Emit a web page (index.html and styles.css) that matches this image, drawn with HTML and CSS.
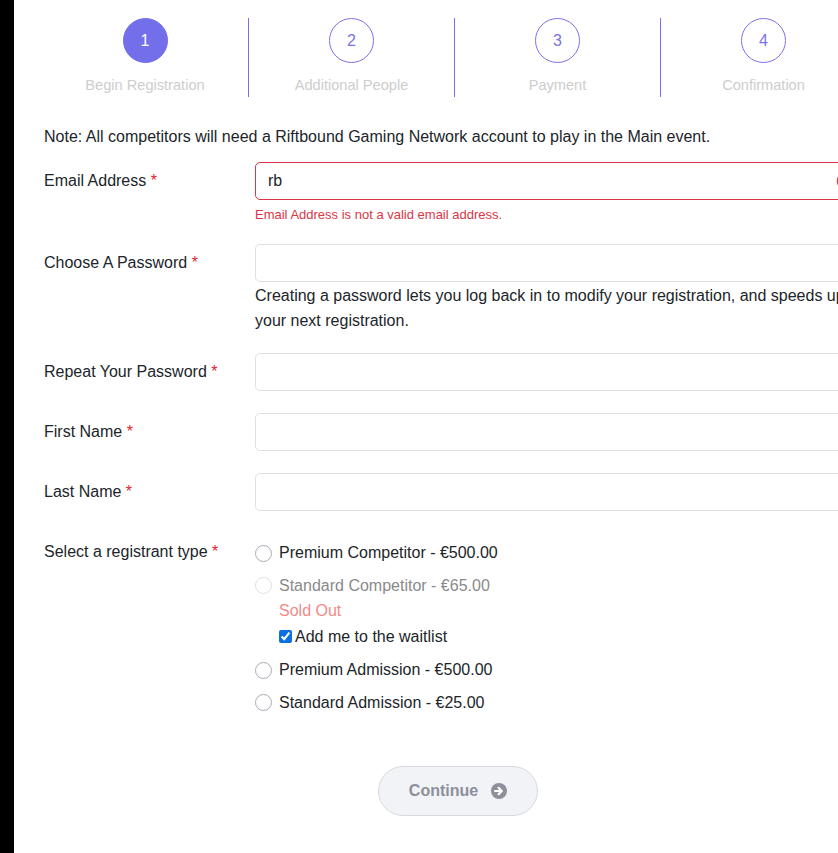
FILE: index.html
```html
<!DOCTYPE html>
<html lang="en">
<head>
  <meta charset="UTF-8" />
  <meta name="viewport" content="width=device-width, initial-scale=1.0"/>
  <title>Registration</title>
  <link rel="stylesheet" href="styles.css">
</head>
<body>
  <div class="edge"></div>

  <main class="page">
    <!-- Registration steps -->
    <ol class="steps">
      <li class="step active"><span class="step-num">1</span><span class="step-label">Begin Registration</span></li>
      <li class="step"><span class="step-num">2</span><span class="step-label">Additional People</span></li>
      <li class="step"><span class="step-num">3</span><span class="step-label">Payment</span></li>
      <li class="step"><span class="step-num">4</span><span class="step-label">Confirmation</span></li>
    </ol>

    <form class="reg-form" onsubmit="return false">
      <p class="note">Note: All competitors will need a Riftbound Gaming Network account to play in the Main event.</p>

      <div class="form-row">
        <label class="form-label" for="email">Email Address <span class="req">*</span></label>
        <div class="form-field">
          <div class="input-wrap">
            <input class="form-input is-invalid" id="email" type="text" value="rb">
            <svg class="invalid-icon" viewBox="0 0 20 20" width="20" height="20">
              <circle cx="10" cy="10" r="8.5" fill="none" stroke="#dc3545" stroke-width="1.5"/>
              <path d="M10 5.5v5.5" stroke="#dc3545" stroke-width="1.8"/>
              <circle cx="10" cy="14" r="1" fill="#dc3545"/>
            </svg>
          </div>
          <div class="form-error">Email Address is not a valid email address.</div>
        </div>
      </div>

      <div class="form-row">
        <label class="form-label" for="pass">Choose A Password <span class="req">*</span></label>
        <div class="form-field">
          <input class="form-input" id="pass" type="password">
          <div class="form-help">Creating a password lets you log back in to modify your registration, and speeds up your next registration.</div>
        </div>
      </div>

      <div class="form-row">
        <label class="form-label" for="pass2">Repeat Your Password <span class="req">*</span></label>
        <div class="form-field">
          <input class="form-input" id="pass2" type="password">
        </div>
      </div>

      <div class="form-row">
        <label class="form-label" for="first">First Name <span class="req">*</span></label>
        <div class="form-field">
          <input class="form-input" id="first" type="text">
        </div>
      </div>

      <div class="form-row">
        <label class="form-label" for="last">Last Name <span class="req">*</span></label>
        <div class="form-field">
          <input class="form-input" id="last" type="text">
        </div>
      </div>

      <div class="form-row">
        <span class="form-label">Select a registrant type <span class="req">*</span></span>
        <div class="form-field options">
          <label class="option"><input type="radio" name="rtype"> Premium Competitor - €500.00</label>
          <div class="option-group">
            <label class="option disabled"><input type="radio" name="rtype" disabled> Standard Competitor - €65.00</label>
            <div class="sold-out">Sold Out</div>
            <label class="waitlist"><input type="checkbox" checked>Add me to the waitlist</label>
          </div>
          <label class="option"><input type="radio" name="rtype"> Premium Admission - €500.00</label>
          <label class="option"><input type="radio" name="rtype"> Standard Admission - €25.00</label>
        </div>
      </div>

      <div class="actions">
        <button class="btn-continue" type="submit">
          Continue
          <svg viewBox="0 0 16 16" width="16" height="16">
            <circle cx="8" cy="8" r="8" fill="#8d909a"/>
            <path d="M4 8h6.5M7.6 4.8 10.8 8l-3.2 3.2" stroke="#fff" stroke-width="2.2" fill="none" stroke-linecap="round" stroke-linejoin="round"/>
          </svg>
        </button>
      </div>
    </form>
  </main>
</body>
</html>
```

FILE: styles.css
```css
/* Base */
html, body {
  margin: 0;
  height: 100%;
  overflow: hidden;
}
body {
  display: flex;
  background: #fff;
  color: #212529;
  font-family: "Liberation Sans", Arial, sans-serif;
  font-size: 16px;
}

/* Dark strip on the left */
.edge {
  width: 14px;
  flex-shrink: 0;
  background: #000;
}

.page {
  flex-shrink: 0;
  width: 826px;
  padding: 18px 0 0 28px;
}

/* Steps bar */
.steps {
  display: flex;
  list-style: none;
  margin: 0;
  padding: 0;
  width: 824px;
}
.step {
  box-sizing: border-box;
  width: 206px;
  height: 79px;
  display: flex;
  flex-direction: column;
  align-items: center;
}
.step + .step {
  border-left: 1px solid #7b70e6;
}
.step-num {
  box-sizing: border-box;
  width: 45px;
  height: 45px;
  border-radius: 50%;
  border: 1.5px solid #7c72ea;
  color: #7c72ea;
  display: flex;
  align-items: center;
  justify-content: center;
  font-size: 16px;
}
.step.active .step-num {
  background: #736eea;
  border-color: #736eea;
  color: #fff;
}
.step-label {
  margin-top: 14px;
  font-size: 14.6px;
  line-height: 17px;
  color: #cdcdcd;
}

/* Form */
.reg-form {
  padding-left: 2px;
}
.note {
  margin: 31px 0 16px;
  line-height: 18px;
}
.form-row {
  display: grid;
  grid-template-columns: 211px 1fr;
  margin-bottom: 22px;
}
.form-label {
  line-height: 38px;
}
.req {
  color: #e0242f;
}
.input-wrap {
  position: relative;
}
.form-input {
  display: block;
  box-sizing: border-box;
  width: 100%;
  height: 38px;
  margin: 0;
  padding: 0 12px;
  border: 1px solid #dfe0e6;
  border-radius: 5px;
  font: 16px "Liberation Sans", Arial, sans-serif;
  color: #212529;
  background: #fff;
  outline: none;
}
.form-input.is-invalid {
  border-color: #dc3545;
}
.invalid-icon {
  position: absolute;
  right: 12px;
  top: 9px;
}
.form-error {
  margin-top: 7px;
  font-size: 13px;
  line-height: 15px;
  color: #dc3545;
}
.form-help {
  padding-top: 1px;
  line-height: 25px;
  margin-bottom: -2px;
}

/* Registrant type options */
.options {
  display: flex;
  flex-direction: column;
  gap: 8.5px;
  padding-top: 8px;
}
.option {
  display: flex;
  align-items: center;
  line-height: 24px;
}
.option input {
  appearance: none;
  width: 17px;
  height: 17px;
  margin: 0 7px 0 0;
  border: 1px solid #a9abb3;
  border-radius: 50%;
  background: #fff;
}
.option.disabled {
  color: #8a8a8a;
}
.option.disabled input {
  border-color: #dedfe3;
}
.sold-out {
  padding-left: 24px;
  line-height: 25px;
  color: #f28a8a;
}
.waitlist {
  display: flex;
  align-items: center;
  padding-left: 24px;
  line-height: 27px;
}
.waitlist input {
  width: 13px;
  height: 13px;
  margin: 0 3px 0 0;
  accent-color: #0b6fe0;
}

/* Continue button */
.actions {
  display: flex;
  justify-content: center;
  padding-top: 29px;
  padding-left: 4px;
}
.btn-continue {
  display: flex;
  align-items: center;
  gap: 13px;
  height: 50px;
  padding: 0 30px;
  border: 1px solid #d8dadf;
  border-radius: 25px;
  background: #f1f3f6;
  color: #8d909a;
  font: bold 16px "Liberation Sans", Arial, sans-serif;
  cursor: pointer;
}
```
